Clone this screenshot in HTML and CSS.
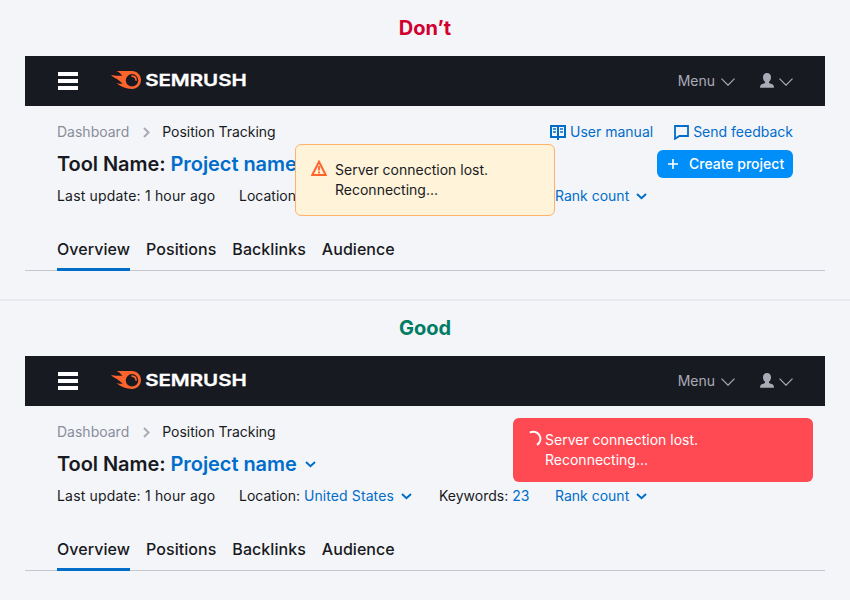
FILE: index.html
```html
<!DOCTYPE html>
<html lang="en">
<head>
<meta charset="utf-8">
<title>Connection status</title>
<link rel="stylesheet" href="styles.css">
</head>
<body>
<svg class="defs" width="0" height="0">
  <symbol id="menu" viewBox="0 0 20 18"><path d="M0 0h20v4H0zM0 7h20v4H0zM0 14h20v4H0z" fill="#fff"/></symbol>
  <symbol id="comet" viewBox="0 0 31 20">
    <path d="M5.500 1H21c5 0 9 4 9 9s-4 9-9 9c-5.500 0-10.500-1.800-15.500-5.700 2.800.5 4.500.6 6.200.5C9.500 12 8 10.200 5 8.600 3 7.400 1.300 6.500 0 5c4.200.8 8 1 11.500.8C10.200 4.500 8.500 2 5.500 1z" fill="#ff642d"/>
    <circle cx="21" cy="10.300" r="6.200" fill="#181a22"/>
    <path d="M21 6.100a4.300 4.300 0 0 1 4.100 4.100" fill="none" stroke="#ff642d" stroke-width="1.600" stroke-linecap="round"/>
  </symbol>
  <symbol id="thin" viewBox="0 0 14 8"><path d="M.5.7 7 7.200 13.500.7" fill="none" stroke="#a9abb6" stroke-width="1.200"/></symbol>
  <symbol id="user" viewBox="0 0 14 15"><path d="M7 0C4.500 0 3 1.700 3 4.200c0 2.200.8 3.800 2 4.600v1.300L1.200 11.400Q0 12 0 14.800h14q0-2.800-1.200-3.400L9 10.100V8.800c1.200-.8 2-2.400 2-4.600C11 1.700 9.500 0 7 0z" fill="#a9abb6"/></symbol>
  <symbol id="crumb" viewBox="0 0 7 11"><path d="M1 1l4.500 4.500L1 10" fill="none" stroke="#a9abb6" stroke-width="2"/></symbol>
  <symbol id="down" viewBox="0 0 11 7"><path d="M1 1l4.500 4.200L10 1" fill="none" stroke="#006dca" stroke-width="2"/></symbol>
  <symbol id="book" viewBox="0 0 16 16"><path d="M1 2h14v11H1zM8 1v15" fill="none" stroke="#006dca" stroke-width="2"/><path d="M3 5h3M3 8h3M10 5h3M10 8h3" fill="none" stroke="#006dca" stroke-width="1.500"/></symbol>
  <symbol id="chat" viewBox="0 0 15 16"><path d="M1 2h13v10H5.500L1 14.800z" fill="none" stroke="#006dca" stroke-width="1.800"/></symbol>
</svg>

<section class="example">
  <h2 class="verdict bad">Don’t</h2>
  <header class="bar">
    <svg class="burger" width="20" height="18"><use href="#menu"/></svg>
    <svg class="logo" width="136" height="20"><use href="#comet" width="31" height="20"/><text class="wordmark" x="34.200" y="15.600" textLength="101.500" lengthAdjust="spacingAndGlyphs">SEMRUSH</text></svg>
    <span class="bar-menu">Menu</span>
    <svg class="thin" width="14" height="8"><use href="#thin"/></svg>
    <svg class="user" width="14" height="15"><use href="#user"/></svg>
    <svg class="thin" width="14" height="8"><use href="#thin"/></svg>
  </header>
  <div class="tool">
    <div class="crumbs">
      <span class="muted">Dashboard</span>
      <svg class="sep" width="7" height="11"><use href="#crumb"/></svg>
      <span class="current">Position Tracking</span>
      <a class="help manual"><svg width="16" height="16"><use href="#book"/></svg>User manual</a>
      <a class="help"><svg width="15" height="16"><use href="#chat"/></svg>Send feedback</a>
    </div>
    <div class="heading">
      <h1>Tool Name: <a>Project name</a></h1>
      <svg class="title-arrow" width="11" height="7"><use href="#down"/></svg>
      <button class="create"><svg width="10" height="10" viewBox="0 0 10 10"><path d="M5 0v10M0 5h10" stroke="#fff" stroke-width="1.600"/></svg>Create project</button>
    </div>
    <div class="meta">
      <span class="updated">Last update: 1 hour ago</span>
      <span class="location">Location: <a>United States</a><svg width="11" height="7"><use href="#down"/></svg></span>
      <span class="keywords">Keywords: <a>23</a></span>
      <span><a>Rank count</a><svg width="11" height="7"><use href="#down"/></svg></span>
    </div>
  </div>
  <nav class="tabs"><a class="active">Overview</a><a>Positions</a><a>Backlinks</a><a>Audience</a></nav>
  <div class="notice warning">
    <svg width="16" height="16" viewBox="0 0 16 16"><path d="M8 1.800 14.700 15H1.300z" fill="none" stroke="#ff642d" stroke-width="2"/><path d="M8 6v4.500M8 11.500v2" stroke="#ff642d" stroke-width="1.800"/></svg>
    <p>Server connection lost.<br>Reconnecting...</p>
  </div>
</section>

<section class="example second">
  <h2 class="verdict good">Good</h2>
  <header class="bar">
    <svg class="burger" width="20" height="18"><use href="#menu"/></svg>
    <svg class="logo" width="136" height="20"><use href="#comet" width="31" height="20"/><text class="wordmark" x="34.200" y="15.600" textLength="101.500" lengthAdjust="spacingAndGlyphs">SEMRUSH</text></svg>
    <span class="bar-menu">Menu</span>
    <svg class="thin" width="14" height="8"><use href="#thin"/></svg>
    <svg class="user" width="14" height="15"><use href="#user"/></svg>
    <svg class="thin" width="14" height="8"><use href="#thin"/></svg>
  </header>
  <div class="tool">
    <div class="crumbs">
      <span class="muted">Dashboard</span>
      <svg class="sep" width="7" height="11"><use href="#crumb"/></svg>
      <span class="current">Position Tracking</span>
    </div>
    <div class="heading">
      <h1>Tool Name: <a>Project name</a></h1>
      <svg class="title-arrow" width="11" height="7"><use href="#down"/></svg>
    </div>
    <div class="meta">
      <span class="updated">Last update: 1 hour ago</span>
      <span class="location">Location: <a>United States</a><svg width="11" height="7"><use href="#down"/></svg></span>
      <span class="keywords">Keywords: <a>23</a></span>
      <span><a>Rank count</a><svg width="11" height="7"><use href="#down"/></svg></span>
    </div>
  </div>
  <nav class="tabs"><a class="active">Overview</a><a>Positions</a><a>Backlinks</a><a>Audience</a></nav>
  <div class="notice error">
    <svg width="16" height="16" viewBox="0 0 16 16"><path d="M.8 2.700A6.500 6.500 0 0 1 8 14.800" fill="none" stroke="#fff" stroke-width="2"/></svg>
    <p>Server connection lost.<br>Reconnecting...</p>
  </div>
</section>
</body>
</html>
```
FILE: styles.css
```css
* { box-sizing: border-box; }
body {
  margin: 0;
  background: #f4f5f9;
  color: #181a22;
  font: 14px/20px Inter, sans-serif;
}
h1, h2, p { margin: 0; }
svg { display: block; flex: none; }
.defs { position: absolute; }
.example {
  position: relative;
  height: 300px;
  padding: 0 25px;
  border-bottom: 1px solid #e9eaef;
}
.second { border-bottom: 0; border-top: 1px solid #e9eaef; }
.verdict {
  height: 56px;
  font-size: 20px;
  line-height: 56px;
  font-weight: 700;
  text-align: center;
}
.second .verdict { height: 55px; line-height: 54px; }
.bad { color: #d1002f; }
.good { color: #007c65; }
.bar {
  display: flex;
  align-items: center;
  height: 50px;
  padding: 0 32px 0 33px;
  background: #181a22;
  color: #a9abb6;
}
.logo { margin: -2px 0 0 33px; }
.wordmark { font: 600 15.800px Inter, sans-serif; fill: #fff; stroke: #fff; stroke-width: .3px; }
.bar-menu { margin: 0 6px 0 auto; }
.thin { margin-top: 2px; }
.user { margin: -2px 5px 0 25px; }
.tool { padding: 16px 32px 0; }
.crumbs { display: flex; align-items: center; height: 20px; }
.muted { color: #898d9a; }
.current { letter-spacing: -.03px; }
.sep { margin: 0 12px 0 14px; }
.tool a { color: #006dca; }
.help { display: flex; align-items: center; gap: 4px; }
.manual { margin: 0 21px 0 auto; }
.heading { display: flex; align-items: center; height: 28px; margin-top: 8px; }
h1 { font-size: 20px; line-height: 28px; font-weight: 600; letter-spacing: -.06px; white-space: nowrap; }
.title-arrow { margin-left: 8px; }
.create {
  display: flex;
  align-items: center;
  gap: 11px;
  width: 136px;
  height: 28px;
  margin-left: auto;
  padding: 0 0 0 11px;
  border: 0;
  border-radius: 6px;
  background: #008ff8;
  color: #fff;
  font: 500 14px/20px Inter, sans-serif;
  white-space: nowrap;
}
.meta { display: flex; height: 20px; margin-top: 8px; white-space: nowrap; }
.meta span { display: flex; align-items: center; white-space: pre; }
.meta svg { margin-left: 7px; }
.updated { width: 182px; letter-spacing: .18px; }
.location { width: 200px; }
.location a { letter-spacing: .1px; }
.keywords { width: 116px; }
.tabs {
  display: flex;
  gap: 16px;
  height: 65px;
  padding: 26px 32px 0;
  border-bottom: 1px solid #c4c7cf;
  font-size: 16px;
  line-height: 34px;
  font-weight: 500;
  letter-spacing: .05px;
}
.tabs a { height: 39px; }
.tabs .active { border-bottom: 3px solid #006dca; }
.notice { position: absolute; display: flex; border-radius: 6px; }
.warning {
  left: 295px;
  top: 144px;
  width: 260px;
  height: 72px;
  padding: 15px;
  gap: 8px;
  border: 1px solid #ffb26e;
  background: #fff3d9;
}
.error {
  left: 513px;
  top: 117px;
  width: 300px;
  height: 64px;
  padding: 12px 16px;
  background: #ff4953;
  color: #fff;
}
```
